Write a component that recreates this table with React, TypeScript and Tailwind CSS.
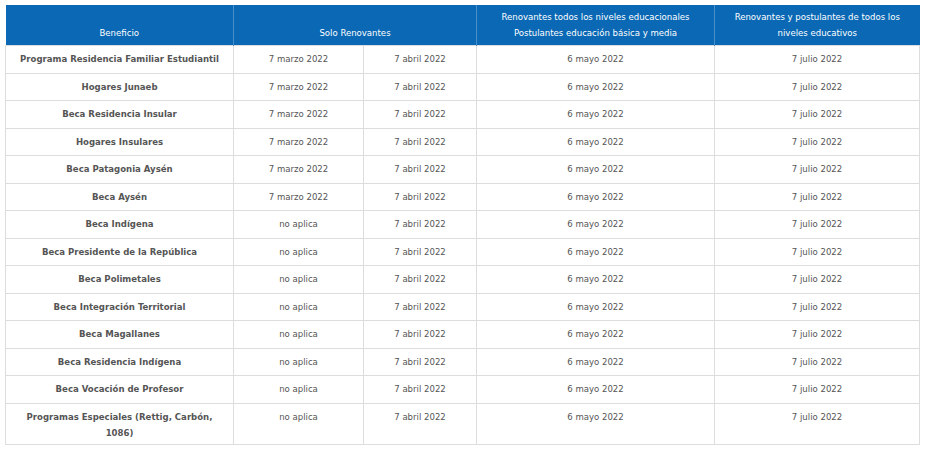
const rows: [string, string, string, string, string][] = [
  ["Programa Residencia Familiar Estudiantil", "7 marzo 2022", "7 abril 2022", "6 mayo 2022", "7 julio 2022"],
  ["Hogares Junaeb", "7 marzo 2022", "7 abril 2022", "6 mayo 2022", "7 julio 2022"],
  ["Beca Residencia Insular", "7 marzo 2022", "7 abril 2022", "6 mayo 2022", "7 julio 2022"],
  ["Hogares Insulares", "7 marzo 2022", "7 abril 2022", "6 mayo 2022", "7 julio 2022"],
  ["Beca Patagonia Aysén", "7 marzo 2022", "7 abril 2022", "6 mayo 2022", "7 julio 2022"],
  ["Beca Aysén", "7 marzo 2022", "7 abril 2022", "6 mayo 2022", "7 julio 2022"],
  ["Beca Indígena", "no aplica", "7 abril 2022", "6 mayo 2022", "7 julio 2022"],
  ["Beca Presidente de la República", "no aplica", "7 abril 2022", "6 mayo 2022", "7 julio 2022"],
  ["Beca Polimetales", "no aplica", "7 abril 2022", "6 mayo 2022", "7 julio 2022"],
  ["Beca Integración Territorial", "no aplica", "7 abril 2022", "6 mayo 2022", "7 julio 2022"],
  ["Beca Magallanes", "no aplica", "7 abril 2022", "6 mayo 2022", "7 julio 2022"],
  ["Beca Residencia Indígena", "no aplica", "7 abril 2022", "6 mayo 2022", "7 julio 2022"],
  ["Beca Vocación de Profesor", "no aplica", "7 abril 2022", "6 mayo 2022", "7 julio 2022"],
  ["Programas Especiales (Rettig, Carbón, 1086)", "no aplica", "7 abril 2022", "6 mayo 2022", "7 julio 2022"],
];

export default function App() {
  return (
    <div className="w-[927px] h-[452px] bg-white pt-[5px] pl-[5px] font-['DejaVu_Sans_Condensed','DejaVu_Sans',sans-serif]">
      <table className="w-[914px] table-fixed border-collapse text-[9.5px] text-[#555]">
        <colgroup>
          <col className="w-[228px]" />
          <col className="w-[130px]" />
          <col className="w-[113px]" />
          <col className="w-[238px]" />
          <col className="w-[205px]" />
        </colgroup>
        <thead>
          <tr className="h-[40px] bg-[#0a68b4] text-white leading-[16px] align-bottom">
            <th className="font-normal border-r border-[#4a8fc8] px-2 pb-[4px]">Beneficio</th>
            <th colSpan={2} className="font-normal border-r border-[#4a8fc8] px-2 pb-[4px]">Solo Renovantes</th>
            <th className="font-normal border-r border-[#4a8fc8] px-2 pb-[4px]">
              Renovantes todos los niveles educacionales
              <br />
              Postulantes educación básica y media
            </th>
            <th className="font-normal px-4 pb-[4px]">Renovantes y postulantes de todos los niveles educativos</th>
          </tr>
        </thead>
        <tbody>
          {rows.map((r, i) => {
            const last = i === rows.length - 1;
            return (
              <tr key={i} className={last ? "h-[41px] align-top" : i === 0 ? "h-[28px]" : "h-[27.5px]"}>
                <td className={`border border-[#ddd] px-3 text-center font-bold leading-[16px] ${last ? "pt-[5px]" : ""}`}>{r[0]}</td>
                {r.slice(1).map((c, j) => (
                  <td key={j} className={`border border-[#ddd] text-center leading-[16px] ${last ? "pt-[5px]" : ""}`}>
                    {c}
                  </td>
                ))}
              </tr>
            );
          })}
        </tbody>
      </table>
    </div>
  );
}
